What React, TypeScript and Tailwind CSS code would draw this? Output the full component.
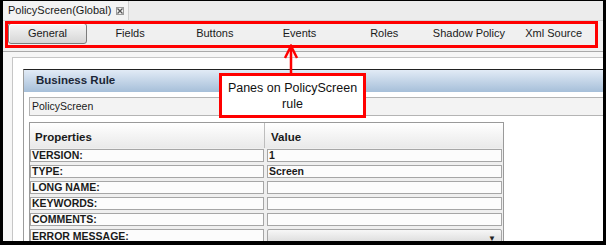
import React from "react";

const tabs = ["General", "Fields", "Buttons", "Events", "Roles", "Shadow Policy", "Xml Source"];

const rows: [string, string][] = [
  ["VERSION:", "1"],
  ["TYPE:", "Screen"],
  ["LONG NAME:", ""],
  ["KEYWORDS:", ""],
  ["COMMENTS:", ""],
];

function CloseIcon() {
  return (
    <svg width="8" height="8" viewBox="0 0 8 8" className="shrink-0">
      <rect x="0.5" y="0.5" width="7" height="7" fill="none" stroke="#9a9a9a" strokeWidth="1" />
      <path d="M1.5 1.5 L6.5 6.5 M6.5 1.5 L1.5 6.5" stroke="#555" strokeWidth="1.3" />
    </svg>
  );
}

export default function App() {
  return (
    <div
      className="relative h-[245px] w-[606px] overflow-hidden bg-black pb-[4px] pl-[3px] pr-[3px] pt-[1px] text-[#1a1a1a]"
      style={{ fontFamily: '"Liberation Sans", Arial, sans-serif' }}
    >
      <div className="flex h-[240px] flex-col overflow-hidden bg-[#f6f6f6]">
        {/* editor tab strip */}
        <div className="flex h-[20px] shrink-0 border-b border-[#d4d4d4] bg-[#ececec]">
          <div className="flex w-[126px] items-center justify-between border-r border-[#cfcfcf] bg-[#f3f3f3] pl-[5px] pr-[4px] text-[11px]">
            <span>PolicyScreen(Global)</span>
            <CloseIcon />
          </div>
        </div>

        {/* pane tabs */}
        <div className="shrink-0 border-b border-[#a9a9a9] bg-[#f0f0f0] pb-[7px] pt-[2px]">
          <div className="grid w-[593px] grid-cols-7 text-[11px]">
            {tabs.map((tab, i) =>
              i === 0 ? (
                <div key={tab} className="flex h-[21px] pl-[5px]">
                  <div className="flex w-[79px] items-center justify-center rounded-[3px] border border-[#7c7c7c] bg-gradient-to-b from-[#f6f6f6] to-[#d6d6d6] shadow-[inset_1px_1px_0_#ffffff]">
                    {tab}
                  </div>
                </div>
              ) : (
                <div key={tab} className="flex h-[21px] items-center justify-center">
                  {tab}
                </div>
              )
            )}
          </div>
        </div>

        {/* content */}
        <div className="flex-1 pl-[9px] pt-[5px]">
          <div className="h-full border-l border-t border-[#c6c6c6] bg-white pl-[10px] pt-[11px]">
            <div className="h-full border-l border-t border-l-[#9c9c9c] border-t-[#222] bg-white">
              <div className="flex h-[22px] items-center bg-gradient-to-b from-[#e2ebf6] to-[#a6bfd9] pl-[12px] text-[11.5px] font-bold text-[#1b2636]">
                Business Rule
              </div>
              <div className="pl-[5px] pt-[5px]">
                <div className="flex h-[19px] items-center border border-r-0 border-[#b4b4b4] bg-[#f3f3f3] pl-[2px] text-[10.5px]">
                  PolicyScreen
                </div>

                <div className="mt-[6px] w-[475px] border border-[#9a9a9a] bg-[#efefef]">
                  <div className="flex h-[25px] bg-gradient-to-b from-[#ffffff] to-[#e9e9e9] text-[11.5px] font-bold">
                    <div className="flex w-[235px] items-center border-r border-[#bdbdbd] pl-[5px] pt-[4px]">
                      Properties
                    </div>
                    <div className="flex items-center pl-[6px] pt-[4px]">Value</div>
                  </div>
                  <div className="flex flex-col gap-[3px] pt-[1px]">
                    {rows.map(([label, value]) => (
                      <div key={label} className="flex gap-[3px] text-[10.5px] font-bold">
                        <div className="flex h-[13px] w-[234px] items-center border border-[#a6a6a6] bg-[#fcfcfc] pl-[1px] leading-none">
                          {label}
                        </div>
                        <div className="flex h-[13px] w-[235px] items-center border border-[#a6a6a6] bg-[#fcfcfc] pl-[1px] leading-none">
                          {value}
                        </div>
                      </div>
                    ))}
                    <div className="flex gap-[3px] text-[10.5px] font-bold">
                      <div className="flex h-[16px] w-[234px] items-start border border-[#a6a6a6] bg-[#fcfcfc] pl-[1px] leading-[13px]">
                        ERROR MESSAGE:
                      </div>
                      <div className="relative h-[16px] w-[235px] rounded-[2px] border border-[#a6a6a6] bg-gradient-to-b from-[#f7f7f7] to-[#d9d9d9]">
                        <span className="absolute right-[5px] top-[5px] text-[8px] leading-none text-[#222]">▼</span>
                      </div>
                    </div>
                  </div>
                </div>
              </div>
            </div>
          </div>
        </div>
      </div>

      {/* annotation: red frame round the pane tabs */}
      <div className="absolute left-[5px] top-[21px] h-[27px] w-[593px] border-[3px] border-[#ff0000]" />

      {/* annotation: arrow */}
      <svg className="absolute left-[280px] top-[44px]" width="22" height="32" viewBox="0 0 22 32">
        <path d="M11 2 L11 31" stroke="#ff0000" strokeWidth="2.5" />
        <path d="M5 14 L11 2 L17 14" fill="none" stroke="#ff0000" strokeWidth="2.5" />
      </svg>

      {/* annotation: callout */}
      <div className="absolute left-[219px] top-[73px] flex h-[45px] w-[147px] flex-col items-center justify-center border-[3px] border-[#ff0000] bg-white text-[12.5px] leading-[16px] text-[#111]">
        <span>Panes on PolicyScreen</span>
        <span>rule</span>
      </div>
    </div>
  );
}
